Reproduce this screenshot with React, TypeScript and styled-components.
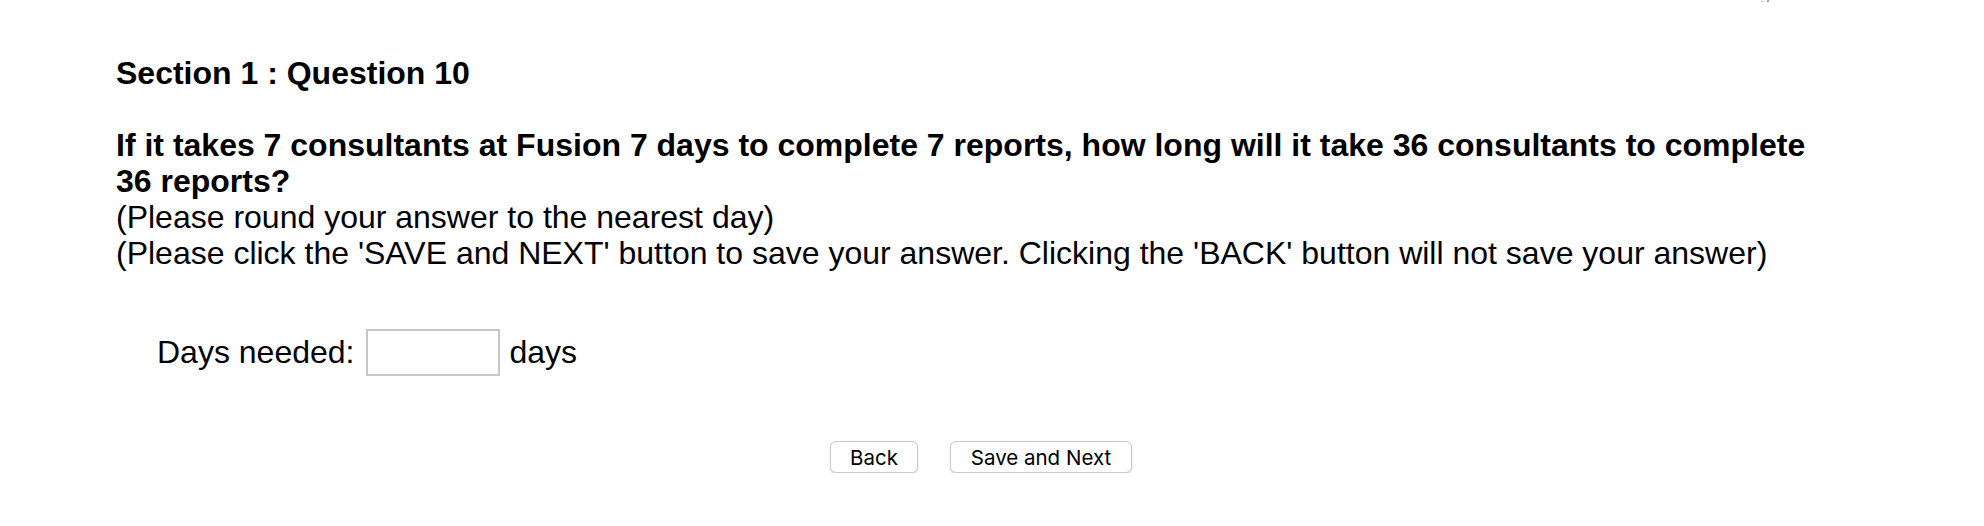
import React from "react";
import styled, { createGlobalStyle } from "styled-components";

const Global = createGlobalStyle`
  html, body { margin: 0; padding: 0; background: #ffffff; }
  body { font-family: "Liberation Sans", Arial, sans-serif; color: #000; }
`;

const TopBar = styled.div`
  height: 2px;
  overflow: hidden;
  display: flex;
  justify-content: flex-end;
  align-items: flex-end;
  padding-right: 154px;
`;

const Timer = styled.span`
  font-size: 19.5px;
  line-height: 1;
  color: #9a9a9a;
  white-space: nowrap;
  margin-bottom: -1.5px;
`;

const Main = styled.main`
  width: 1720px;
  padding: 53px 0 0 116px;
`;

const Block = styled.div`
  font-size: 32px;
  line-height: 36px;
`;

const Strong = styled.strong`
  font-weight: 700;
`;

const AnswerRow = styled.div`
  display: flex;
  align-items: center;
  height: 47px;
  margin-top: 58px;
  padding-left: 41px;
  font-size: 32px;
`;

const Label = styled.label`
  margin-right: 12px;
`;

const Input = styled.input`
  box-sizing: border-box;
  width: 134px;
  height: 47px;
  border: 2px solid #c8c8c8;
  border-radius: 0;
  padding: 0 6px;
  font-size: 24px;
  font-family: inherit;
  margin-right: 9px;
  outline: none;
`;

const Buttons = styled.div`
  display: flex;
  justify-content: center;
  gap: 32px;
  margin-top: 65px;
  width: 1730px;
`;

const Button = styled.button<{ $w: number }>`
  box-sizing: border-box;
  width: ${(p) => p.$w}px;
  height: 32px;
  background: #ffffff;
  border: 1px solid #c9c9c9;
  border-radius: 6px;
  box-shadow: 0 1px 2px rgba(0, 0, 0, 0.15);
  font-family: Inter, "Liberation Sans", sans-serif;
  font-size: 20.5px;
  color: #000;
  padding: 0;
  cursor: pointer;
`;

export default function App() {
  return (
    <>
      <Global />
      <TopBar>
        <Timer>Time remaining: 45:00</Timer>
      </TopBar>
      <Main>
        <Block>
          <Strong>Section 1 : Question 10</Strong>
          <br />
          <br />
          <Strong>
            If it takes 7 consultants at Fusion 7 days to complete 7 reports, how long will it take 36 consultants to
            complete 36 reports?
          </Strong>
          <br />
          (Please round your answer to the nearest day)
          <br />
          (Please click the 'SAVE and NEXT' button to save your answer. Clicking the 'BACK' button will not save your
          answer)
        </Block>
        <AnswerRow>
          <Label htmlFor="days">Days needed:</Label>
          <Input id="days" type="text" />
          <span>days</span>
        </AnswerRow>
        <Buttons>
          <Button $w={88}>Back</Button>
          <Button $w={182}>Save and Next</Button>
        </Buttons>
      </Main>
    </>
  );
}
